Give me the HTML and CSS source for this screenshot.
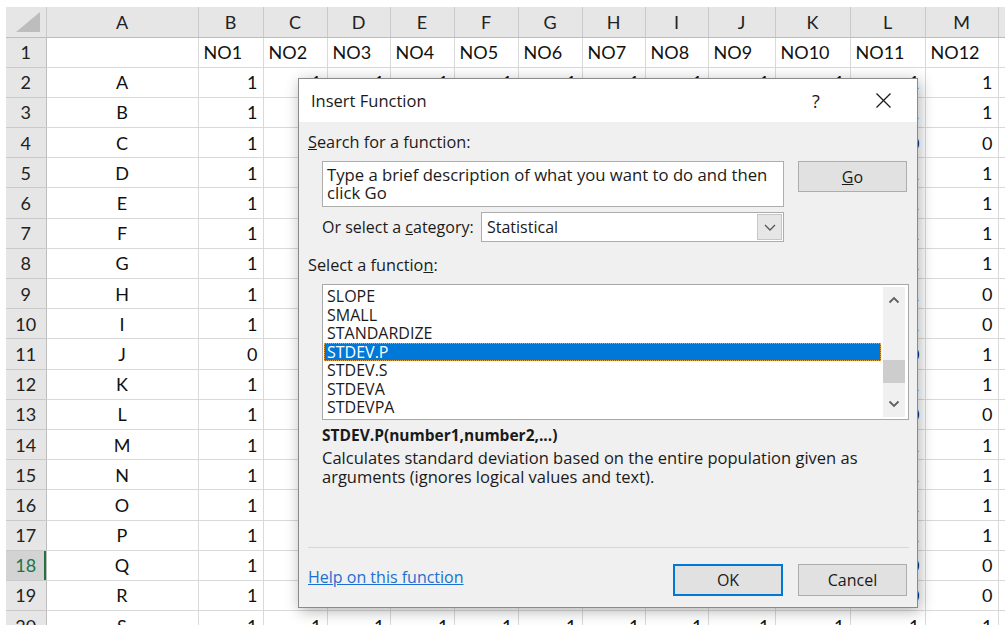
FILE: index.html
```html
<!DOCTYPE html>
<html lang="en">
<head>
<meta charset="utf-8">
<title>Insert Function</title>
<link rel="stylesheet" href="styles.css">
</head>
<body>
<div class="sheet">
  <table class="grid">
    <colgroup>
      <col class="w-hdr"><col class="w-a"><col class="w-b"><col class="w-c"><col class="w-d"><col class="w-e"><col class="w-f"><col class="w-g"><col class="w-h"><col class="w-i"><col class="w-j"><col class="w-k"><col class="w-l"><col class="w-m"><col class="w-n">
    </colgroup>
    <thead>
      <tr>
        <th class="corner"><svg width="40" height="29" viewBox="0 0 40 29"><path d="M34 5 L34 25 L10 25 Z" fill="#bdbdbd"/></svg></th>
        <th>A</th><th>B</th><th>C</th><th>D</th><th>E</th><th>F</th><th>G</th><th>H</th><th>I</th><th>J</th><th>K</th><th>L</th><th>M</th><th></th>
      </tr>
    </thead>
    <tbody>
      <tr><th>1</th><td></td><td class="txt">NO1</td><td class="txt">NO2</td><td class="txt">NO3</td><td class="txt">NO4</td><td class="txt">NO5</td><td class="txt">NO6</td><td class="txt">NO7</td><td class="txt">NO8</td><td class="txt">NO9</td><td class="txt">NO10</td><td class="txt">NO11</td><td class="txt">NO12</td><td></td></tr>
      <tr><th>2</th><td class="ctr">A</td><td>1</td><td>1</td><td>1</td><td>1</td><td>1</td><td>1</td><td>1</td><td>1</td><td>1</td><td>1</td><td>1</td><td>1</td><td></td></tr>
      <tr><th>3</th><td class="ctr">B</td><td>1</td><td>1</td><td>1</td><td>1</td><td>1</td><td>1</td><td>1</td><td>1</td><td>1</td><td>1</td><td>1</td><td>1</td><td></td></tr>
      <tr><th>4</th><td class="ctr">C</td><td>1</td><td>1</td><td>1</td><td>0</td><td>1</td><td>1</td><td>1</td><td>1</td><td>1</td><td>1</td><td>0</td><td>0</td><td></td></tr>
      <tr><th>5</th><td class="ctr">D</td><td>1</td><td>1</td><td>1</td><td>1</td><td>1</td><td>1</td><td>1</td><td>1</td><td>1</td><td>1</td><td>1</td><td>1</td><td></td></tr>
      <tr><th>6</th><td class="ctr">E</td><td>1</td><td>1</td><td>1</td><td>1</td><td>1</td><td>1</td><td>1</td><td>1</td><td>1</td><td>1</td><td>1</td><td>1</td><td></td></tr>
      <tr><th>7</th><td class="ctr">F</td><td>1</td><td>1</td><td>0</td><td>1</td><td>1</td><td>1</td><td>1</td><td>1</td><td>1</td><td>1</td><td>1</td><td>1</td><td></td></tr>
      <tr><th>8</th><td class="ctr">G</td><td>1</td><td>1</td><td>1</td><td>1</td><td>1</td><td>1</td><td>1</td><td>1</td><td>1</td><td>1</td><td>1</td><td>1</td><td></td></tr>
      <tr><th>9</th><td class="ctr">H</td><td>1</td><td>1</td><td>1</td><td>1</td><td>1</td><td>1</td><td>1</td><td>0</td><td>1</td><td>1</td><td>1</td><td>0</td><td></td></tr>
      <tr><th>10</th><td class="ctr">I</td><td>1</td><td>1</td><td>1</td><td>1</td><td>1</td><td>1</td><td>1</td><td>1</td><td>1</td><td>1</td><td>1</td><td>0</td><td></td></tr>
      <tr><th>11</th><td class="ctr">J</td><td>0</td><td>1</td><td>1</td><td>1</td><td>1</td><td>1</td><td>1</td><td>1</td><td>1</td><td>1</td><td>0</td><td>1</td><td></td></tr>
      <tr><th>12</th><td class="ctr">K</td><td>1</td><td>1</td><td>1</td><td>1</td><td>1</td><td>1</td><td>1</td><td>1</td><td>1</td><td>1</td><td>1</td><td>1</td><td></td></tr>
      <tr><th>13</th><td class="ctr">L</td><td>1</td><td>1</td><td>1</td><td>1</td><td>1</td><td>0</td><td>1</td><td>1</td><td>1</td><td>1</td><td>0</td><td>0</td><td></td></tr>
      <tr><th>14</th><td class="ctr">M</td><td>1</td><td>1</td><td>1</td><td>1</td><td>1</td><td>1</td><td>1</td><td>1</td><td>1</td><td>1</td><td>1</td><td>1</td><td></td></tr>
      <tr><th>15</th><td class="ctr">N</td><td>1</td><td>1</td><td>1</td><td>1</td><td>1</td><td>1</td><td>1</td><td>1</td><td>1</td><td>1</td><td>1</td><td>1</td><td></td></tr>
      <tr><th>16</th><td class="ctr">O</td><td>1</td><td>1</td><td>1</td><td>1</td><td>1</td><td>1</td><td>1</td><td>1</td><td>1</td><td>1</td><td>1</td><td>1</td><td></td></tr>
      <tr><th>17</th><td class="ctr">P</td><td>1</td><td>1</td><td>1</td><td>1</td><td>1</td><td>1</td><td>1</td><td>1</td><td>1</td><td>1</td><td>1</td><td>1</td><td></td></tr>
      <tr><th class="sel">18</th><td class="ctr">Q</td><td>1</td><td>1</td><td>1</td><td>1</td><td>1</td><td>1</td><td>1</td><td>1</td><td>1</td><td>1</td><td>0</td><td>0</td><td></td></tr>
      <tr><th>19</th><td class="ctr">R</td><td>1</td><td>1</td><td>1</td><td>1</td><td>1</td><td>1</td><td>1</td><td>1</td><td>1</td><td>1</td><td>0</td><td>0</td><td></td></tr>
      <tr><th>20</th><td class="ctr">S</td><td>1</td><td>1</td><td>1</td><td>1</td><td>1</td><td>1</td><td>1</td><td>1</td><td>1</td><td>1</td><td>1</td><td>1</td><td></td></tr>
    </tbody>
  </table>
</div>

<div class="dialog" role="dialog" aria-label="Insert Function">
  <div class="titlebar">
    <span class="title">Insert Function</span>
    <span class="help">?</span>
    <svg class="close" width="15" height="15" viewBox="0 0 15 15"><path d="M0.5 0.5 L14.5 14.5 M14.5 0.5 L0.5 14.5" stroke="#1a1a1a" stroke-width="1.3" fill="none"/></svg>
  </div>
  <div class="body">
    <div class="label"><u>S</u>earch for a function:</div>
    <div class="search-row">
      <div class="textbox">Type a brief description of what you want to do and then click Go</div>
      <button class="btn go"><u>G</u>o</button>
    </div>
    <div class="category-row">
      <span class="cat-label">Or select a <u>c</u>ategory:</span>
      <div class="select">
        <span class="value">Statistical</span>
        <span class="drop"><svg width="12" height="7" viewBox="0 0 12 7"><path d="M1 1 L6 6 L11 1" stroke="#555" stroke-width="1.3" fill="none"/></svg></span>
      </div>
    </div>
    <div class="label fn-label">Select a functio<u>n</u>:</div>
    <div class="listbox">
      <ul class="items">
        <li>SLOPE</li>
        <li>SMALL</li>
        <li>STANDARDIZE</li>
        <li class="selected">STDEV.P</li>
        <li>STDEV.S</li>
        <li>STDEVA</li>
        <li>STDEVPA</li>
      </ul>
      <div class="scrollbar">
        <span class="arrow"><svg width="12" height="8" viewBox="0 0 12 8"><path d="M1.5 6.5 L6 2 L10.5 6.5" stroke="#606060" stroke-width="1.8" fill="none"/></svg></span>
        <div class="track"><div class="thumb"></div></div>
        <span class="arrow"><svg width="12" height="8" viewBox="0 0 12 8"><path d="M1.5 1.5 L6 6 L10.5 1.5" stroke="#606060" stroke-width="1.8" fill="none"/></svg></span>
      </div>
    </div>
    <div class="syntax">STDEV.P(number1,number2,...)</div>
    <p class="desc">Calculates standard deviation based on the entire population given as arguments (ignores logical values and text).</p>
    <div class="sep"></div>
    <div class="footer">
      <a class="helplink" href="#">Help on this function</a>
      <div class="buttons">
        <button class="btn ok">OK</button>
        <button class="btn">Cancel</button>
      </div>
    </div>
  </div>
</div>
</body>
</html>
```
FILE: styles.css
```css
* { box-sizing: border-box; }

html, body {
  margin: 0;
  width: 1005px;
  height: 625px;
}

body {
  position: relative;
  overflow: hidden;
  background: #ffffff;
}

/* worksheet */
.sheet {
  padding: 7px 0 0 6px;
}

.grid {
  border-collapse: collapse;
  table-layout: fixed;
  width: 1072px;
  font-family: Lato, "Liberation Sans", sans-serif;
  font-size: 18px;
  color: #111;
}

.w-hdr { width: 40px; }
.w-a { width: 152px; }
.w-b { width: 65px; }
.w-c { width: 64px; }
.w-d { width: 63px; }
.w-e { width: 64px; }
.w-f { width: 64px; }
.w-g { width: 64px; }
.w-h { width: 63px; }
.w-i { width: 63px; }
.w-j { width: 67px; }
.w-k { width: 75px; }
.w-l { width: 75px; }
.w-m { width: 73px; }
.w-n { width: 80px; }

.grid th {
  background: #e6e6e6;
  font-weight: normal;
  text-align: center;
  padding: 0;
  color: #222;
}

.grid thead tr { height: 30px; }

.grid thead th {
  border-right: 1px solid #cacaca;
  border-bottom: 1px solid #bdbdbd;
}

.grid thead th.corner {
  line-height: 0;
  vertical-align: top;
}

.grid tbody tr { height: 30.2px; }

.grid tbody th {
  border-right: 1px solid #bdbdbd;
  border-bottom: 1px solid #cacaca;
}

.grid tbody th.sel {
  background: #d3d3d3;
  color: #217346;
  box-shadow: inset -2px 0 0 #217346;
}

.grid td {
  border-right: 1px solid #d9d9d9;
  border-bottom: 1px solid #d9d9d9;
  text-align: right;
  padding: 0 5px;
  white-space: nowrap;
  overflow: hidden;
}

.grid td.ctr { text-align: center; }
.grid td.txt { text-align: left; }

/* Insert Function dialog */
.dialog {
  position: absolute;
  left: 298px;
  top: 78px;
  width: 620px;
  height: 530px;
  display: flex;
  flex-direction: column;
  background: #f0f0f0;
  border: 1px solid #8a8a8a;
  box-shadow: 2px 3px 14px rgba(0, 0, 0, 0.3);
  font-family: "Open Sans", "Liberation Sans", sans-serif;
  font-size: 16px;
  color: #1a1a1a;
}

.titlebar {
  flex: none;
  height: 43px;
  display: flex;
  align-items: center;
  padding-left: 12px;
  background: #ffffff;
}

.title {
  flex: 1;
  font-size: 16.5px;
}

.help {
  width: 20px;
  text-align: center;
  font-size: 18px;
  margin-right: 50px;
}

.close {
  margin-right: 26px;
}

.body {
  flex: 1;
  display: flex;
  flex-direction: column;
  padding: 0 8px 0 9px;
}

.label {
  margin-top: 10px;
  line-height: 20px;
  font-size: 16.3px;
}

.search-row {
  margin-top: 9px;
  padding-left: 14px;
  display: flex;
  align-items: flex-start;
  gap: 14px;
}

.textbox {
  width: 462px;
  height: 46px;
  background: #fff;
  border: 1px solid #adadad;
  padding: 4px 4px 0 4px;
  line-height: 18px;
  font-size: 16.7px;
}

.btn {
  font: inherit;
  color: #1a1a1a;
  height: 31px;
  width: 109px;
  background: #e1e1e1;
  border: 1px solid #adadad;
  padding: 0;
  line-height: 28px;
}

.category-row {
  margin-top: 5px;
  padding-left: 14px;
  display: flex;
  align-items: center;
  height: 30px;
}

.cat-label { width: 159px; }

.select {
  width: 303px;
  height: 30px;
  display: flex;
  align-items: stretch;
  background: #fff;
  border: 1px solid #acacac;
}

.select .value {
  flex: 1;
  padding-left: 5px;
  line-height: 28px;
}

.drop {
  width: 25px;
  margin: 1px;
  display: flex;
  align-items: center;
  justify-content: center;
  background: #e6e6e6;
  border: 1px solid #c6c6c6;
}

.fn-label { margin-top: 13px; }

.listbox {
  margin: 9px 0 0 14px;
  width: 587px;
  height: 136px;
  display: flex;
  background: #fff;
  border: 1px solid #a8a8a8;
}

.items {
  flex: 1;
  list-style: none;
  margin: 0;
  padding: 2px 0 0 0;
}

.items li {
  height: 18.5px;
  line-height: 18.5px;
  margin: 0 2px 0 1px;
  padding-left: 3px;
}

.items li.selected {
  background: #0078d7;
  color: #fff;
  outline: 1px dotted #f0a040;
  outline-offset: -1px;
}

.scrollbar {
  width: 22px;
  margin: 2px 3px 2px 0;
  display: flex;
  flex-direction: column;
  background: #f0f0f0;
}

.arrow {
  height: 26px;
  display: flex;
  align-items: center;
  justify-content: center;
}

.track {
  flex: 1;
  padding-top: 47px;
}

.thumb {
  height: 23px;
  background: #cdcdcd;
}

.syntax {
  margin: 5px 0 0 14px;
  line-height: 20px;
  font-weight: bold;
  font-size: 15.5px;
}

.desc {
  margin: 3px 0 0 14px;
  width: 587px;
  line-height: 19px;
  font-size: 16.5px;
}

.sep {
  margin-top: 61px;
  width: 601px;
  height: 1px;
  background: #d6d6d6;
}

.footer {
  margin-top: 16px;
  display: flex;
  justify-content: space-between;
  align-items: flex-start;
  padding-right: 2px;
}

.helplink {
  margin-top: 3px;
  line-height: 20px;
  color: #1c6fd1;
  text-decoration: underline;
}

.buttons {
  display: flex;
  gap: 15px;
}

.buttons .btn {
  height: 32px;
  width: 109px;
}

.buttons .btn.ok {
  width: 110px;
  border: 2px solid #0078d7;
}
```
